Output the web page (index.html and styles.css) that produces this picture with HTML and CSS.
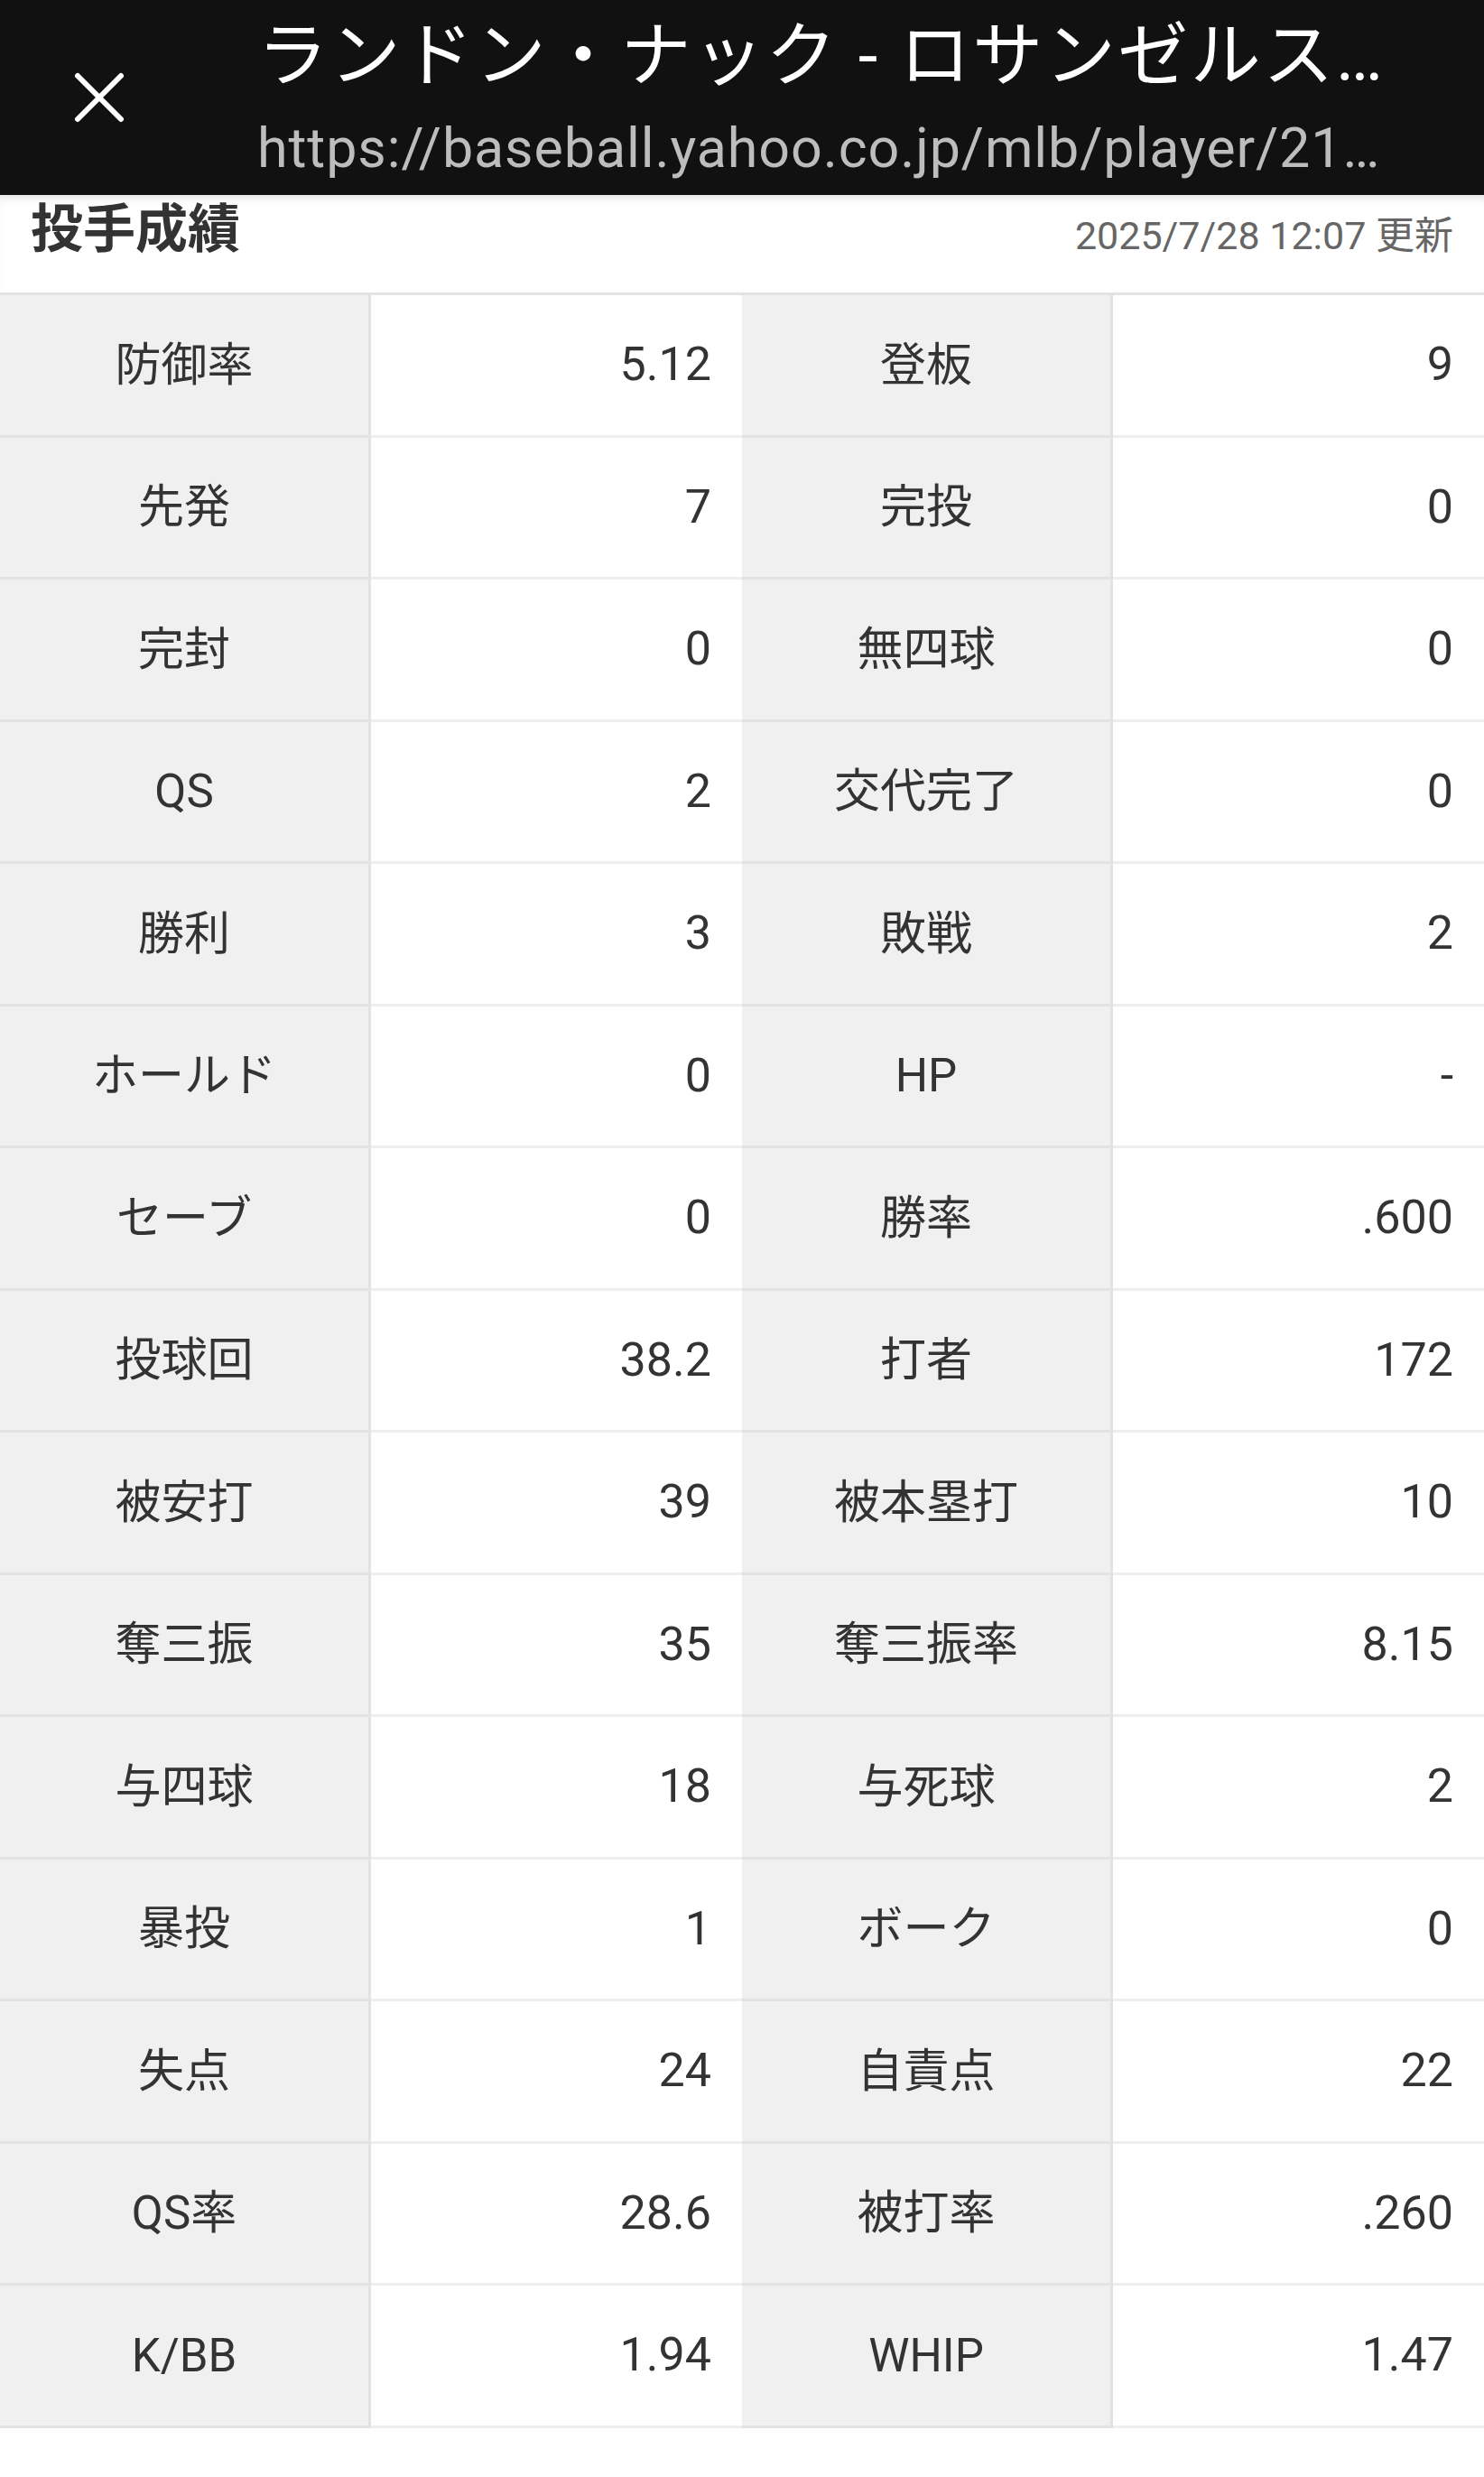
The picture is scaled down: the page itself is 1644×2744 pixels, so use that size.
FILE: index.html
```html
<!DOCTYPE html>
<html lang="ja">
<head>
<meta charset="utf-8">
<title>ランドン・ナック - ロサンゼルス</title>
<link rel="stylesheet" href="styles.css">
</head>
<body>
<header class="topbar">
  <div class="close-btn">
    <svg width="60" height="60" viewBox="0 0 60 60" aria-hidden="true">
      <path d="M6 6 L54 54 M54 6 L6 54" stroke="#ffffff" stroke-width="6" stroke-linecap="round" fill="none"/>
    </svg>
  </div>
  <div class="titles">
    <div class="page-title">ランドン・ナック - ロサンゼルス…</div>
    <div class="page-url">https://baseball.yahoo.co.jp/mlb/player/21…</div>
  </div>
</header>

<section class="section-head">
  <h1 class="section-title">投手成績</h1>
  <p class="updated">2025/7/28 12:07 更新</p>
</section>

<div class="stats">
  <div class="lbl">防御率</div><div class="val">5.12</div><div class="lbl">登板</div><div class="val">9</div>
  <div class="lbl">先発</div><div class="val">7</div><div class="lbl">完投</div><div class="val">0</div>
  <div class="lbl">完封</div><div class="val">0</div><div class="lbl">無四球</div><div class="val">0</div>
  <div class="lbl">QS</div><div class="val">2</div><div class="lbl">交代完了</div><div class="val">0</div>
  <div class="lbl">勝利</div><div class="val">3</div><div class="lbl">敗戦</div><div class="val">2</div>
  <div class="lbl">ホールド</div><div class="val">0</div><div class="lbl">HP</div><div class="val">-</div>
  <div class="lbl">セーブ</div><div class="val">0</div><div class="lbl">勝率</div><div class="val">.600</div>
  <div class="lbl">投球回</div><div class="val">38.2</div><div class="lbl">打者</div><div class="val">172</div>
  <div class="lbl">被安打</div><div class="val">39</div><div class="lbl">被本塁打</div><div class="val">10</div>
  <div class="lbl">奪三振</div><div class="val">35</div><div class="lbl">奪三振率</div><div class="val">8.15</div>
  <div class="lbl">与四球</div><div class="val">18</div><div class="lbl">与死球</div><div class="val">2</div>
  <div class="lbl">暴投</div><div class="val">1</div><div class="lbl">ボーク</div><div class="val">0</div>
  <div class="lbl">失点</div><div class="val">24</div><div class="lbl">自責点</div><div class="val">22</div>
  <div class="lbl">QS率</div><div class="val">28.6</div><div class="lbl">被打率</div><div class="val">.260</div>
  <div class="lbl">K/BB</div><div class="val">1.94</div><div class="lbl">WHIP</div><div class="val">1.47</div>
</div>
</body>
</html>
```

FILE: styles.css
```css
* {
  box-sizing: border-box;
}

html, body {
  margin: 0;
  padding: 0;
  background: #ffffff;
}

body {
  font-family: Roboto, "Noto Sans CJK JP", sans-serif;
  color: #333333;
  width: 1644px;
}

.topbar {
  display: flex;
  align-items: center;
  height: 216px;
  background: #111111;
}

.close-btn {
  flex: none;
  width: 285px;
  padding-left: 80px;
  display: flex;
  align-items: center;
}

.close-btn svg {
  display: block;
}

.titles {
  flex: 1;
  min-width: 0;
  padding-right: 40px;
  padding-top: 2px;
}

.page-title {
  font-size: 78px;
  line-height: 78px;
  letter-spacing: 2.5px;
  color: #ffffff;
  white-space: nowrap;
}

.page-url {
  margin-top: 32px;
  font-size: 61px;
  line-height: 61px;
  letter-spacing: 0.9px;
  color: #bdbdbd;
  white-space: nowrap;
}

.section-head {
  display: flex;
  justify-content: space-between;
  align-items: flex-start;
  height: 108px;
  padding: 0 34px 0 34px;
  box-shadow: inset 0 10px 12px -8px rgba(0, 0, 0, 0.14);
}

.section-title {
  margin: 9px 0 0 0;
  font-size: 58px;
  line-height: 58px;
  font-weight: 700;
  color: #333333;
}

.updated {
  margin: 24px 0 0 0;
  font-size: 43px;
  line-height: 43px;
  color: #666666;
}

.stats {
  display: grid;
  grid-template-columns: repeat(4, 411px);
  grid-auto-rows: 157.5px;
  border-top: 3px solid #e3e3e3;
}

.lbl {
  display: flex;
  align-items: center;
  justify-content: center;
  background: #f0f0f0;
  border-right: 3px solid #e2e2e2;
  border-bottom: 3px solid #e3e3e3;
  font-size: 51px;
  line-height: 1;
  color: #333333;
}

.val {
  display: flex;
  align-items: center;
  justify-content: flex-end;
  padding-right: 34px;
  background: #ffffff;
  border-bottom: 3px solid #eeeeee;
  font-size: 52px;
  line-height: 1;
  color: #333333;
}
```
